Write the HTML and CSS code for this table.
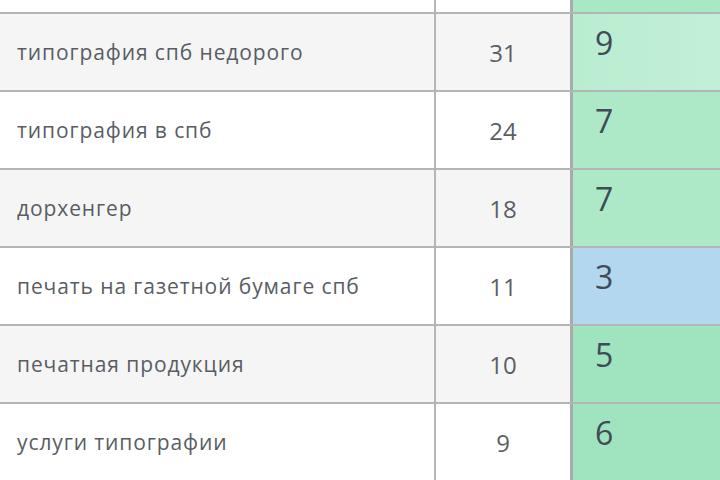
FILE: index.html
```html
<!DOCTYPE html>
<html lang="ru">
<head>
<meta charset="utf-8">
<title>Позиции</title>
<link rel="stylesheet" href="styles.css">
</head>
<body>
<div class="table">
  <div class="row row-partial">
    <div class="kw"></div>
    <div class="freq"></div>
    <div class="pos pos-g0"></div>
  </div>
  <div class="row row-alt">
    <div class="kw">типография спб недорого</div>
    <div class="freq">31</div>
    <div class="pos pos-g1">9</div>
  </div>
  <div class="row">
    <div class="kw">типография в спб</div>
    <div class="freq">24</div>
    <div class="pos pos-g2">7</div>
  </div>
  <div class="row row-alt">
    <div class="kw">дорхенгер</div>
    <div class="freq">18</div>
    <div class="pos pos-g2">7</div>
  </div>
  <div class="row">
    <div class="kw">печать на газетной бумаге спб</div>
    <div class="freq">11</div>
    <div class="pos pos-b">3</div>
  </div>
  <div class="row row-alt">
    <div class="kw">печатная продукция</div>
    <div class="freq">10</div>
    <div class="pos pos-g3">5</div>
  </div>
  <div class="row">
    <div class="kw">услуги типографии</div>
    <div class="freq">9</div>
    <div class="pos pos-g3">6</div>
  </div>
</div>
</body>
</html>
```

FILE: styles.css
```css
html, body {
  margin: 0;
  padding: 0;
  background: #ffffff;
  overflow: hidden;
}

body {
  font-family: "Open Sans", "Noto Sans", sans-serif;
  width: 720px;
  height: 480px;
}

.table {
  display: flex;
  flex-direction: column;
}

.row {
  display: grid;
  grid-template-columns: 436px 137px 1fr;
  height: 76px;
  border-top: 2px solid #b4b5b6;
  background: #ffffff;
}

.row-partial {
  height: 12px;
  border-top: none;
  overflow: hidden;
}

.row-alt {
  background: #f5f5f6;
}

.kw {
  display: flex;
  align-items: center;
  padding-left: 17px;
  font-size: 21px;
  letter-spacing: 0.9px;
  color: #585d63;
  border-right: 2px solid #b4b5b6;
}

.freq {
  display: flex;
  align-items: center;
  justify-content: center;
  font-size: 24px;
  color: #5a5f65;
  border-right: 3px solid #a9aaab;
}

.pos {
  padding: 7px 0 0 22px;
  font-size: 32px;
  color: #3f4b57;
  line-height: 1.36;
}

.pos-g0 { background: #a9e8c4; }
.pos-g1 { background: linear-gradient(90deg, #b9edd0, #c2efd8); }
.pos-g2 { background: #ade9c7; }
.pos-b  { background: #b3d7ef; }
.pos-g3 { background: #9fe4be; }
```
